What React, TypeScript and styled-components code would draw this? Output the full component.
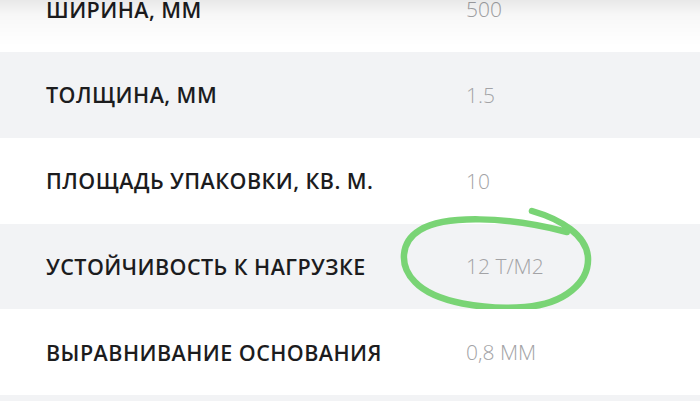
import React from 'react';
import styled, {createGlobalStyle} from 'styled-components';

const specs = [
  {label: 'Ширина, мм', value: '500'},
  {label: 'Толщина, мм', value: '1.5'},
  {label: 'Площадь упаковки, кв. м.', value: '10'},
  {label: 'Устойчивость к нагрузке', value: '12 т/м2', marked: true},
  {label: 'Выравнивание основания', value: '0,8 мм'},
];

const GlobalStyle = createGlobalStyle`
  html, body {
    margin: 0;
    padding: 0;
    background: #ffffff;
    overflow: hidden;
  }
  body {
    font-family: "Open Sans", "Liberation Sans", sans-serif;
  }
`;

export default function App() {
  return (
    <>
      <GlobalStyle />
      <HeaderShadow />
      <Table>
        {specs.map((spec, i) => (
          <Row key={spec.label} $striped={i % 2 === 1}>
            <Label>{spec.label}</Label>
            <Value>{spec.value}</Value>
            {spec.marked && <Scribble />}
          </Row>
        ))}
        <Tail />
      </Table>
    </>
  );
}

const Scribble = () => (
  <Mark viewBox="0 0 200 115" width={200} height={115}>
    <path
      d="M 137 11
         C 165 19, 192 35, 193 58
         C 194 82, 170 104, 130 107
         C 90 110, 40 103, 20 82
         C 4 66, 5 42, 25 30
         C 50 15, 110 16, 172 32"
      fill="none"
      stroke="#79d475"
      strokeWidth={6.5}
      strokeLinecap="round"
      strokeLinejoin="round"
    />
  </Mark>
);

const HeaderShadow = styled.div`
  position: fixed;
  top: 0;
  left: 0;
  right: 0;
  height: 46px;
  background: linear-gradient(
    to bottom,
    rgba(0, 0, 0, 0.09) 0px,
    rgba(0, 0, 0, 0.03) 14px,
    rgba(0, 0, 0, 0) 46px
  );
  pointer-events: none;
  z-index: 2;
`;

const Table = styled.div`
  display: flex;
  flex-direction: column;
  margin-top: -33.75px;
`;

const Row = styled.div<{$striped: boolean}>`
  position: relative;
  display: grid;
  grid-template-columns: 420px 1fr;
  align-items: center;
  height: 85.75px;
  padding-left: 46px;
  background: ${p => (p.$striped ? '#f2f3f5' : '#ffffff')};
`;

const Tail = styled.div`
  height: 6px;
  background: #f2f3f5;
`;

const Label = styled.div`
  font-family: "Open Sans", "Liberation Sans", sans-serif;
  font-size: 21.5px;
  font-weight: 600;
  text-transform: uppercase;
  color: #1c1c1e;
  letter-spacing: 0.45px;
  white-space: nowrap;
`;

const Value = styled.div`
  font-family: "Open Sans", "Liberation Sans", sans-serif;
  font-size: 21px;
  font-weight: 300;
  text-transform: uppercase;
  color: #a3a3a6;
  white-space: nowrap;
`;

const Mark = styled.svg`
  position: absolute;
  left: 395px;
  top: -24px;
  pointer-events: none;
`;
